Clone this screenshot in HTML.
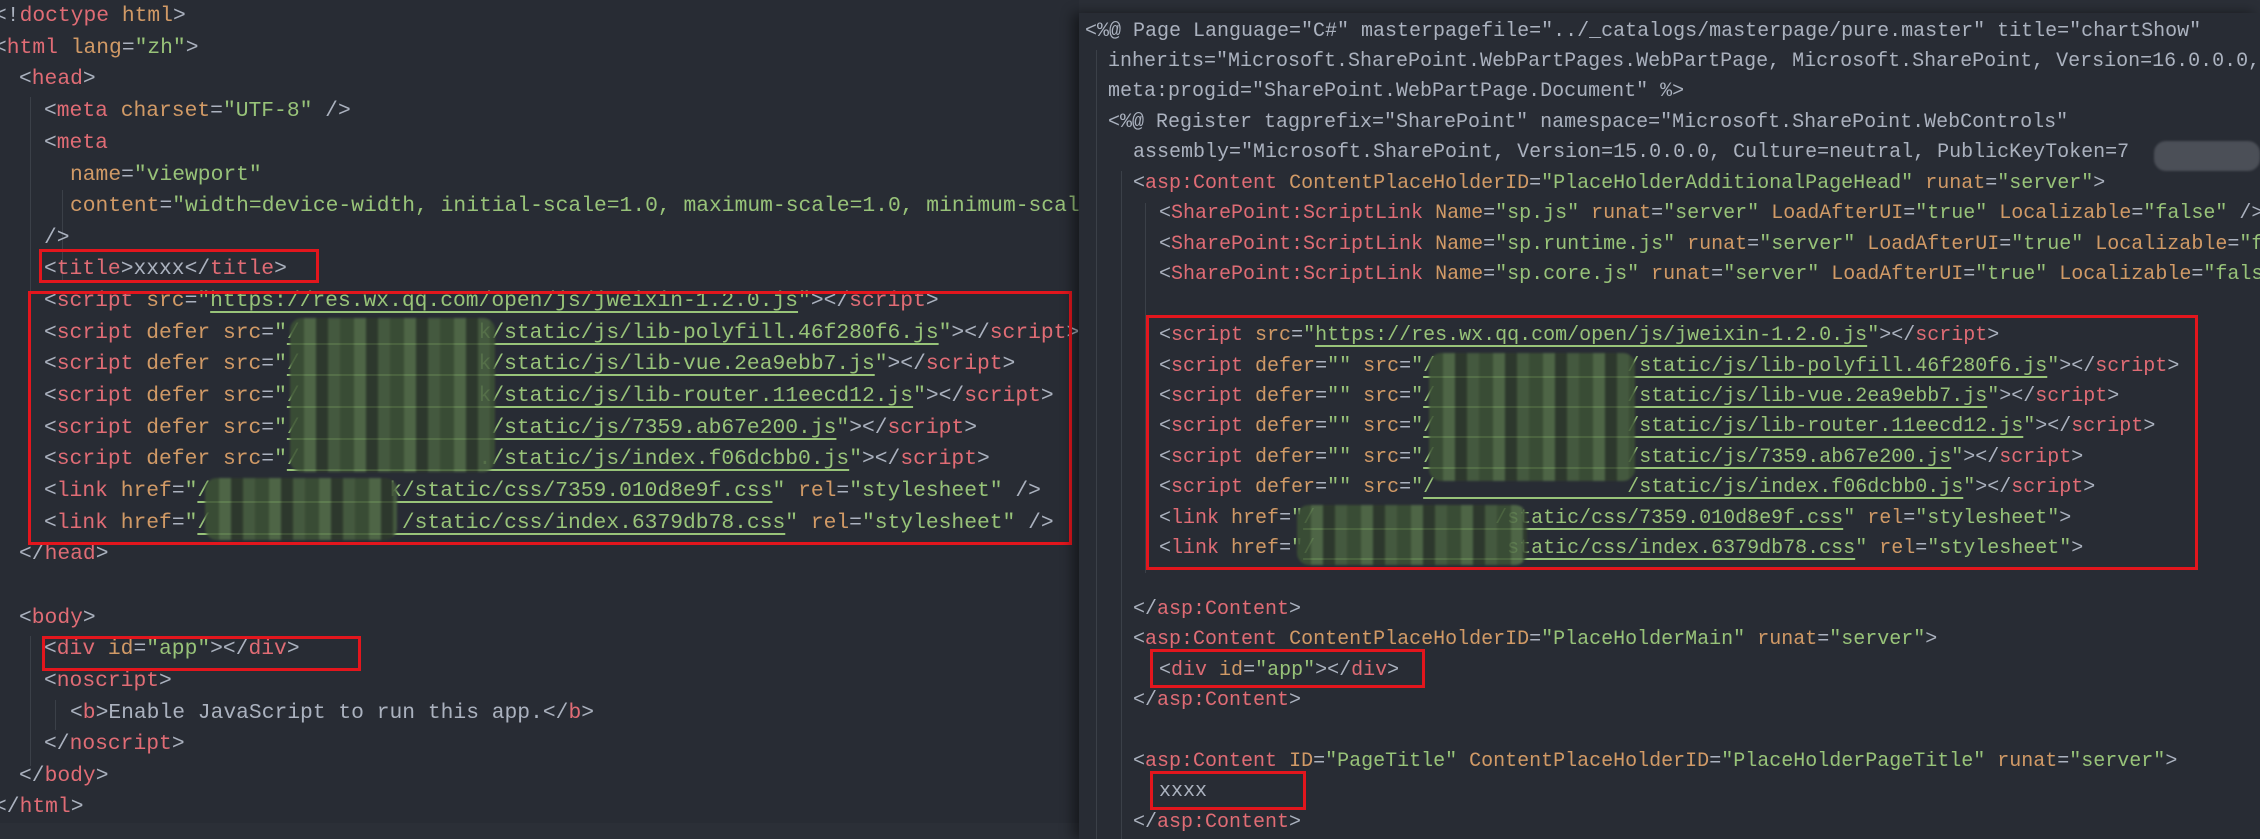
<!DOCTYPE html>
<html><head><meta charset="utf-8"><style>
html,body{margin:0;padding:0}
body{width:2260px;height:839px;overflow:hidden;background:#2b2f37;position:relative;font-family:"Liberation Mono",monospace;color:#abb2bf}
.pane{position:absolute;overflow:hidden}
#L{left:0;top:0;width:1079px;height:823px;background:#282c34}
#R{left:1079px;top:13px;width:1181px;height:826px;background:#282c34;box-shadow:-6px 0 12px rgba(0,0,0,.45)}
.ln{position:absolute;white-space:pre;height:31px}
#L .ln{font-size:21.3px;line-height:31.6px}
#R .ln{font-size:20px;line-height:30.4px}
.t{color:#e06c75}.a{color:#d19a66}.s{color:#98c379}.p{color:#abb2bf}
.u{text-decoration:underline;text-decoration-color:#98c379;text-underline-offset:5px;text-decoration-thickness:2px}
.box{position:absolute;border:3px solid #e3161d;box-sizing:border-box}
.blur{position:absolute;border-radius:12px;opacity:.85;filter:blur(1px);
background:repeating-linear-gradient(90deg,#3d5236 0 14px,#55704a 14px 26px,#2f3b2c 26px 38px,#4a6141 38px 50px),#3f5338}
.g{position:absolute;width:1px;background:#3b4048}
</style></head><body>
<div class="pane" id="L">
<div class="g" style="left:30px;top:97px;height:440px"></div>
<div class="g" style="left:62px;top:190px;height:90px"></div>
<div class="g" style="left:30px;top:636px;height:130px"></div>
<div class="g" style="left:55px;top:700px;height:30px"></div>
<div class="ln" style="left:-6px;top:1px"><span class="p">&lt;!</span><span class="t">doctype</span> <span class="a">html</span><span class="p">&gt;</span></div>
<div class="ln" style="left:-6px;top:33px"><span class="p">&lt;</span><span class="t">html</span> <span class="a">lang</span>=<span class="s">"zh"</span>&gt;</div>
<div class="ln" style="left:19px;top:64px">&lt;<span class="t">head</span>&gt;</div>
<div class="ln" style="left:44px;top:96px">&lt;<span class="t">meta</span> <span class="a">charset</span>=<span class="s">"UTF-8"</span> /&gt;</div>
<div class="ln" style="left:44px;top:128px">&lt;<span class="t">meta</span></div>
<div class="ln" style="left:70px;top:160px"><span class="a">name</span>=<span class="s">"viewport"</span></div>
<div class="ln" style="left:70px;top:191px"><span class="a">content</span>=<span class="s">"width=device-width, initial-scale=1.0, maximum-scale=1.0, minimum-scale=1.0"</span></div>
<div class="ln" style="left:44px;top:223px">/&gt;</div>
<div class="ln" style="left:44px;top:254px">&lt;<span class="t">title</span>&gt;xxxx&lt;/<span class="t">title</span>&gt;</div>
<div class="ln" style="left:44px;top:286px">&lt;<span class="t">script</span> <span class="a">src</span>=<span class="s">"<span class="u">https://res.wx.qq.com/open/js/jweixin-1.2.0.js</span>"</span>&gt;&lt;/<span class="t">script</span>&gt;</div>
<div class="ln" style="left:44px;top:318px">&lt;<span class="t">script</span> <span class="a">defer</span> <span class="a">src</span>=<span class="s">"<span class="u">/              k/static/js/lib-polyfill.46f280f6.js</span>"</span>&gt;&lt;/<span class="t">script</span>&gt;</div>
<div class="ln" style="left:44px;top:349px">&lt;<span class="t">script</span> <span class="a">defer</span> <span class="a">src</span>=<span class="s">"<span class="u">/              k/static/js/lib-vue.2ea9ebb7.js</span>"</span>&gt;&lt;/<span class="t">script</span>&gt;</div>
<div class="ln" style="left:44px;top:381px">&lt;<span class="t">script</span> <span class="a">defer</span> <span class="a">src</span>=<span class="s">"<span class="u">/              k/static/js/lib-router.11eecd12.js</span>"</span>&gt;&lt;/<span class="t">script</span>&gt;</div>
<div class="ln" style="left:44px;top:413px">&lt;<span class="t">script</span> <span class="a">defer</span> <span class="a">src</span>=<span class="s">"<span class="u">/               /static/js/7359.ab67e200.js</span>"</span>&gt;&lt;/<span class="t">script</span>&gt;</div>
<div class="ln" style="left:44px;top:444px">&lt;<span class="t">script</span> <span class="a">defer</span> <span class="a">src</span>=<span class="s">"<span class="u">/              ./static/js/index.f06dcbb0.js</span>"</span>&gt;&lt;/<span class="t">script</span>&gt;</div>
<div class="ln" style="left:44px;top:476px">&lt;<span class="t">link</span> <span class="a">href</span>=<span class="s">"<span class="u">/              k/static/css/7359.010d8e9f.css</span>"</span> <span class="a">rel</span>=<span class="s">"stylesheet"</span> /&gt;</div>
<div class="ln" style="left:44px;top:508px">&lt;<span class="t">link</span> <span class="a">href</span>=<span class="s">"<span class="u">/               /static/css/index.6379db78.css</span>"</span> <span class="a">rel</span>=<span class="s">"stylesheet"</span> /&gt;</div>
<div class="ln" style="left:19px;top:539px">&lt;/<span class="t">head</span>&gt;</div>
<div class="ln" style="left:19px;top:603px">&lt;<span class="t">body</span>&gt;</div>
<div class="ln" style="left:44px;top:634px">&lt;<span class="t">div</span> <span class="a">id</span>=<span class="s">"app"</span>&gt;&lt;/<span class="t">div</span>&gt;</div>
<div class="ln" style="left:44px;top:666px">&lt;<span class="t">noscript</span>&gt;</div>
<div class="ln" style="left:70px;top:698px">&lt;<span class="t">b</span>&gt;Enable JavaScript to run this app.&lt;/<span class="t">b</span>&gt;</div>
<div class="ln" style="left:44px;top:729px">&lt;/<span class="t">noscript</span>&gt;</div>
<div class="ln" style="left:19px;top:761px">&lt;/<span class="t">body</span>&gt;</div>
<div class="ln" style="left:-6px;top:792px">&lt;/<span class="t">html</span>&gt;</div>
<div class="blur" style="left:290px;top:318px;width:205px;height:154px"></div>
<div class="blur" style="left:205px;top:478px;width:192px;height:62px"></div>
<div class="box" style="left:39px;top:249px;width:280px;height:34px"></div>
<div class="box" style="left:28px;top:291px;width:1044px;height:254px"></div>
<div class="box" style="left:42px;top:636px;width:319px;height:35px"></div>
</div>
<div class="pane" id="R">
<div class="g" style="left:17px;top:37px;height:790px"></div>
<div class="g" style="left:42px;top:158px;height:670px"></div>
<div class="g" style="left:66px;top:190px;height:370px"></div>
<div class="ln" style="left:6px;top:4px">&lt;%@ Page Language="C#" masterpagefile="../_catalogs/masterpage/pure.master" title="chartShow"</div>
<div class="ln" style="left:29px;top:34px">inherits="Microsoft.SharePoint.WebPartPages.WebPartPage, Microsoft.SharePoint, Version=16.0.0.0, Culture=neutral"</div>
<div class="ln" style="left:29px;top:64px">meta:progid="SharePoint.WebPartPage.Document" %&gt;</div>
<div class="ln" style="left:29px;top:95px">&lt;%@ Register tagprefix="SharePoint" namespace="Microsoft.SharePoint.WebControls"</div>
<div class="ln" style="left:54px;top:125px">assembly="Microsoft.SharePoint, Version=15.0.0.0, Culture=neutral, PublicKeyToken=7</div>
<div class="ln" style="left:54px;top:156px">&lt;<span class="t">asp:Content</span> <span class="a">ContentPlaceHolderID</span>=<span class="s">"PlaceHolderAdditionalPageHead"</span> <span class="a">runat</span>=<span class="s">"server"</span>&gt;</div>
<div class="ln" style="left:80px;top:186px">&lt;<span class="t">SharePoint:ScriptLink</span> <span class="a">Name</span>=<span class="s">"sp.js"</span> <span class="a">runat</span>=<span class="s">"server"</span> <span class="a">LoadAfterUI</span>=<span class="s">"true"</span> <span class="a">Localizable</span>=<span class="s">"false"</span> /&gt;</div>
<div class="ln" style="left:80px;top:217px">&lt;<span class="t">SharePoint:ScriptLink</span> <span class="a">Name</span>=<span class="s">"sp.runtime.js"</span> <span class="a">runat</span>=<span class="s">"server"</span> <span class="a">LoadAfterUI</span>=<span class="s">"true"</span> <span class="a">Localizable</span>=<span class="s">"false"</span> /&gt;</div>
<div class="ln" style="left:80px;top:247px">&lt;<span class="t">SharePoint:ScriptLink</span> <span class="a">Name</span>=<span class="s">"sp.core.js"</span> <span class="a">runat</span>=<span class="s">"server"</span> <span class="a">LoadAfterUI</span>=<span class="s">"true"</span> <span class="a">Localizable</span>=<span class="s">"false"</span> /&gt;</div>
<div class="ln" style="left:80px;top:308px">&lt;<span class="t">script</span> <span class="a">src</span>=<span class="s">"<span class="u">https://res.wx.qq.com/open/js/jweixin-1.2.0.js</span>"</span>&gt;&lt;/<span class="t">script</span>&gt;</div>
<div class="ln" style="left:80px;top:339px">&lt;<span class="t">script</span> <span class="a">defer</span>=<span class="s">""</span> <span class="a">src</span>=<span class="s">"<span class="u">/                /static/js/lib-polyfill.46f280f6.js</span>"</span>&gt;&lt;/<span class="t">script</span>&gt;</div>
<div class="ln" style="left:80px;top:369px">&lt;<span class="t">script</span> <span class="a">defer</span>=<span class="s">""</span> <span class="a">src</span>=<span class="s">"<span class="u">/                /static/js/lib-vue.2ea9ebb7.js</span>"</span>&gt;&lt;/<span class="t">script</span>&gt;</div>
<div class="ln" style="left:80px;top:399px">&lt;<span class="t">script</span> <span class="a">defer</span>=<span class="s">""</span> <span class="a">src</span>=<span class="s">"<span class="u">/                /static/js/lib-router.11eecd12.js</span>"</span>&gt;&lt;/<span class="t">script</span>&gt;</div>
<div class="ln" style="left:80px;top:430px">&lt;<span class="t">script</span> <span class="a">defer</span>=<span class="s">""</span> <span class="a">src</span>=<span class="s">"<span class="u">/                /static/js/7359.ab67e200.js</span>"</span>&gt;&lt;/<span class="t">script</span>&gt;</div>
<div class="ln" style="left:80px;top:460px">&lt;<span class="t">script</span> <span class="a">defer</span>=<span class="s">""</span> <span class="a">src</span>=<span class="s">"<span class="u">/                /static/js/index.f06dcbb0.js</span>"</span>&gt;&lt;/<span class="t">script</span>&gt;</div>
<div class="ln" style="left:80px;top:491px">&lt;<span class="t">link</span> <span class="a">href</span>=<span class="s">"<span class="u">/               /static/css/7359.010d8e9f.css</span>"</span> <span class="a">rel</span>=<span class="s">"stylesheet"</span>&gt;</div>
<div class="ln" style="left:80px;top:521px">&lt;<span class="t">link</span> <span class="a">href</span>=<span class="s">"<span class="u">/                static/css/index.6379db78.css</span>"</span> <span class="a">rel</span>=<span class="s">"stylesheet"</span>&gt;</div>
<div class="ln" style="left:54px;top:582px">&lt;/<span class="t">asp:Content</span>&gt;</div>
<div class="ln" style="left:54px;top:612px">&lt;<span class="t">asp:Content</span> <span class="a">ContentPlaceHolderID</span>=<span class="s">"PlaceHolderMain"</span> <span class="a">runat</span>=<span class="s">"server"</span>&gt;</div>
<div class="ln" style="left:80px;top:643px">&lt;<span class="t">div</span> <span class="a">id</span>=<span class="s">"app"</span>&gt;&lt;/<span class="t">div</span>&gt;</div>
<div class="ln" style="left:54px;top:673px">&lt;/<span class="t">asp:Content</span>&gt;</div>
<div class="ln" style="left:54px;top:734px">&lt;<span class="t">asp:Content</span> <span class="a">ID</span>=<span class="s">"PageTitle"</span> <span class="a">ContentPlaceHolderID</span>=<span class="s">"PlaceHolderPageTitle"</span> <span class="a">runat</span>=<span class="s">"server"</span>&gt;</div>
<div class="ln" style="left:80px;top:764px">xxxx</div>
<div class="ln" style="left:54px;top:795px">&lt;/<span class="t">asp:Content</span>&gt;</div>
<div class="blur" style="left:350px;top:340px;width:206px;height:128px"></div>
<div class="blur" style="left:218px;top:492px;width:230px;height:60px"></div>
<div class="blur" style="left:1075px;top:128px;width:106px;height:30px;background:#5a5e66;opacity:.7"></div>
<div class="box" style="left:67px;top:302px;width:1052px;height:255px"></div>
<div class="box" style="left:71px;top:636px;width:275px;height:39px"></div>
<div class="box" style="left:71px;top:758px;width:156px;height:39px"></div>
</div>
</body></html>
